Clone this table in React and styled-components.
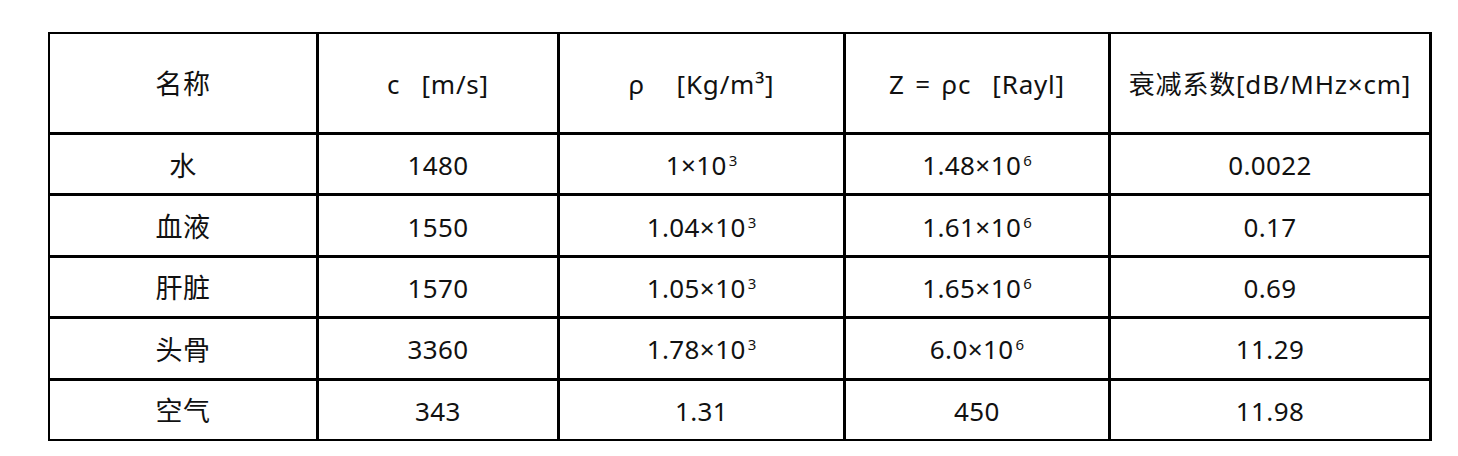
import React from "react";
import styled, { createGlobalStyle } from "styled-components";

const Global = createGlobalStyle`
  html, body { margin: 0; padding: 0; background: #fff; }
  body { font-family: "Noto Sans", "Noto Sans CJK SC", sans-serif; color: #111; }
`;

const Page = styled.div`
  padding: 32px 0 0 48px;
`;

const Grid = styled.div`
  box-sizing: border-box;
  width: 1384px;
  height: 409px;
  padding: 2px;
  background: #000;
  display: grid;
  grid-template-columns: 266px 238px 283px 262px 318px;
  grid-template-rows: 98px repeat(5, 1fr);
  column-gap: 3px;
  row-gap: 3px;
`;

const Cell = styled.div`
  background: #fff;
  display: flex;
  align-items: center;
  justify-content: center;
  font-size: ${(p) => (p.$cjk ? "27px" : "26px")};
  font-family: "Noto Sans", "Noto Sans CJK SC", sans-serif;
  letter-spacing: ${(p) => (p.$head ? "0.8px" : "0.4px")};
  word-spacing: ${(p) => (p.$head ? "3px" : "0")};
  padding-top: ${(p) => (p.$head ? "1px" : "2px")};
  white-space: pre;
  line-height: 1;
`;

const Text = styled.span`
  display: inline-block;
`;

const Sup = styled.span`
  font-size: 15px;
  vertical-align: 9px;
  margin-left: 2px;
  letter-spacing: 0;
`;

const Pow = ({ base, exp }) => (
  <>
    {base}
    <Sup>{exp}</Sup>
  </>
);

const header = [
  "名称",
  "c  [m/s]",
  "ρ   [Kg/m³]",
  "Z = ρc  [Rayl]",
  "衰减系数[dB/MHz×cm]",
];

const rows = [
  ["水", "1480", <Pow base="1×10" exp="3" />, <Pow base="1.48×10" exp="6" />, "0.0022"],
  ["血液", "1550", <Pow base="1.04×10" exp="3" />, <Pow base="1.61×10" exp="6" />, "0.17"],
  ["肝脏", "1570", <Pow base="1.05×10" exp="3" />, <Pow base="1.65×10" exp="6" />, "0.69"],
  ["头骨", "3360", <Pow base="1.78×10" exp="3" />, <Pow base="6.0×10" exp="6" />, "11.29"],
  ["空气", "343", "1.31", "450", "11.98"],
];

export default function App() {
  return (
    <Page>
      <Global />
      <Grid>
        {header.map((h, i) => (
          <Cell key={"h" + i} $head $cjk={i === 0}>
            <Text>{h}</Text>
          </Cell>
        ))}
        {rows.map((r, ri) =>
          r.map((c, ci) => (
            <Cell key={ri + "-" + ci} $cjk={ci === 0}>
              <Text>{c}</Text>
            </Cell>
          ))
        )}
      </Grid>
    </Page>
  );
}
